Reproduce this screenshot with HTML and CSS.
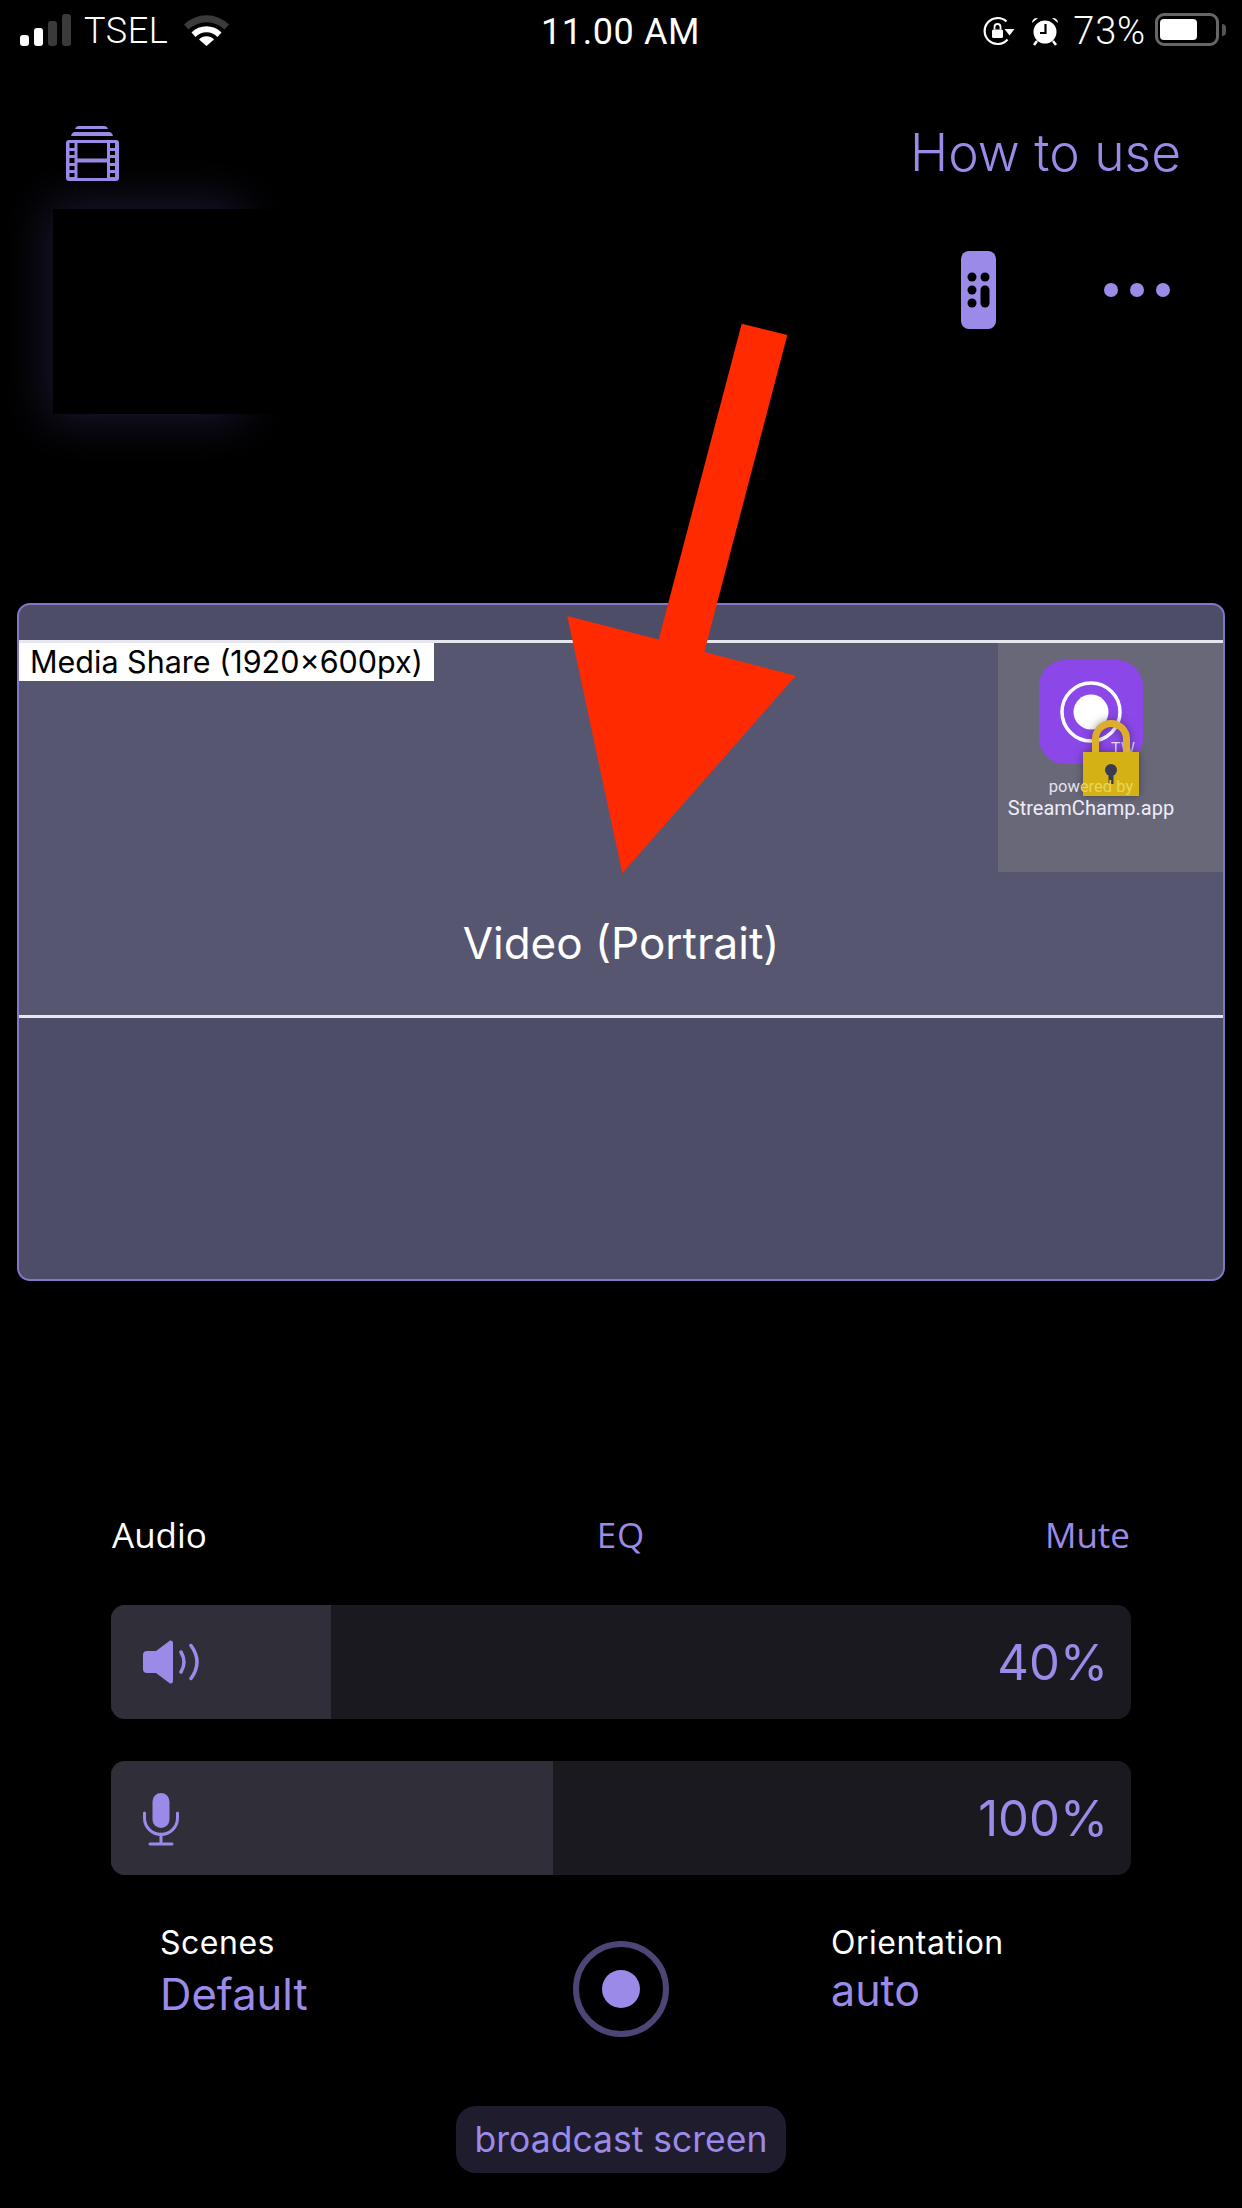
FILE: index.html
```html
<!DOCTYPE html>
<html lang="en">
<head>
<meta charset="utf-8">
<title>Stream</title>
<link rel="stylesheet" href="styles.css">
</head>
<body>
<div class="page">
  <div class="status">
    <div class="status-left">
      <svg class="sig" viewBox="0 0 51 32"><rect x="0" y="21" width="9" height="11" rx="3" fill="#fff"/><rect x="14" y="14" width="9" height="18" rx="3" fill="#fff"/><rect x="28" y="7" width="9" height="25" rx="3" fill="#3a3a3a"/><rect x="42" y="0" width="9" height="32" rx="3" fill="#3a3a3a"/></svg>
      <span class="carrier">TSEL</span>
      <svg class="wifi" viewBox="0 0 45 33"><path d="M0 11.500A32 32 0 0 1 45 11.500L40.500 16.500A26 26 0 0 0 4.500 16.500Z" fill="#3a3a3a"/><path d="M7.500 19.500A21 21 0 0 1 37.500 19.500L33.500 24A15 15 0 0 0 11.500 24Z" fill="#fff"/><path d="M15 26.500A10.500 10.500 0 0 1 30 26.500L22.500 33Z" fill="#fff"/></svg>
    </div>
    <div class="clock">11.00 AM</div>
    <div class="status-right">
      <svg class="rot" viewBox="0 0 32 30"><path d="M23.500 5.500A13 13 0 1 0 24.500 23.500" fill="none" stroke="#fff" stroke-width="2.200"/><path d="M21.500 13H31.500L26.500 19.500Z" fill="#fff"/><rect x="9" y="13.500" width="11" height="8.500" rx="1.500" fill="#fff"/><path d="M11.500 13.500V11A3 3 0 0 1 17.500 11V13.500" fill="none" stroke="#fff" stroke-width="1.800"/></svg>
      <svg class="alarm" viewBox="0 0 28 30"><circle cx="14" cy="16" r="11.500" fill="#fff"/><path d="M1 7A5 5 0 0 1 7 2ZM27 7A5 5 0 0 0 21 2Z" fill="#fff"/><path d="M6 25L3 29M22 25L25 29" stroke="#fff" stroke-width="2.500"/><path d="M14.500 8V17H9" fill="none" stroke="#000" stroke-width="2.200"/></svg>
      <span class="pct">73%</span>
      <div class="battery"><div class="battery-fill"></div></div>
      <div class="battery-nub"></div>
    </div>
  </div>

  <div class="header">
    <svg class="film" viewBox="0 0 53 55">
      <path d="M9 3Q10 0 13 0H38Q41 0 42 3Z" fill="#9b8ae8"/>
      <path d="M5 10Q6 6 9 6H43Q46 6 47 10Z" fill="#9b8ae8"/>
      <path fill-rule="evenodd" fill="#9b8ae8" d="M3 14H50Q53 14 53 17V52Q53 55 50 55H3Q0 55 0 52V17Q0 14 3 14ZM11.500 17V32.500H41V17ZM11.500 36.500V52H41V36.500ZM3.500 17V22H8.500V17ZM3.500 25V29H8.500V25ZM3.500 32V37H8.500V32ZM3.500 40V44H8.500V40ZM3.500 47V51H8.500V47ZM44 17V22H49V17ZM44 25V29H49V25ZM44 32V37H49V32ZM44 40V44H49V40ZM44 47V51H49V47Z"/>
    </svg>
    <span class="howto">How to use</span>
  </div>

  <div class="preview-row">
    <div class="thumb-wrap"><div class="glow"></div><div class="thumb"></div></div>
    <div class="controls">
      <svg class="remote" viewBox="0 0 35 78">
        <rect width="35" height="78" rx="8" fill="#9b8ae8"/>
        <circle cx="11" cy="26" r="4.500" fill="#000"/><circle cx="24" cy="26" r="4.500" fill="#000"/>
        <circle cx="11" cy="39" r="4.500" fill="#000"/><circle cx="11" cy="52" r="4.500" fill="#000"/>
        <rect x="19.500" y="34.500" width="9" height="22" rx="4.500" fill="#000"/>
      </svg>
      <div class="dots"><span class="dot"></span><span class="dot"></span><span class="dot"></span></div>
    </div>
  </div>

  <div class="card">
    <div class="card-band-top"></div>
    <div class="card-middle">
      <div class="media-label">Media Share (1920×600px)</div>
      <div class="watermark">
        <svg class="app-icon" viewBox="0 0 104 104">
          <rect width="104" height="104" rx="26" fill="#8b47e8"/>
          <circle cx="52" cy="52" r="29" fill="none" stroke="#fff" stroke-width="3.500"/>
          <circle cx="52" cy="52" r="17.500" fill="#fff"/>
          <text x="84" y="94" class="tw">TW</text>
        </svg>
        <svg class="lock" viewBox="0 0 56 76">
          <path d="M12.500 36V19A15.500 15.500 0 0 1 43.500 19V36" fill="none" stroke="#dcae2c" stroke-width="7"/>
          <rect y="32" width="56" height="44" fill="#d4b216"/>
          <circle cx="28" cy="50" r="6" fill="#3a3a50"/>
          <rect x="25.500" y="51" width="5" height="13" fill="#3a3a50"/>
        </svg>
        <div class="powered">pow<span class="powered-faded">ered by</span></div>
        <div class="brand">StreamChamp.app</div>
      </div>
      <div class="video-title">Video (Portrait)</div>
    </div>
    <div class="card-band-bottom"></div>
  </div>

  <div class="audio-head">
    <span class="audio-label">Audio</span>
    <span class="audio-link audio-eq">EQ</span>
    <span class="audio-link audio-mute">Mute</span>
  </div>

  <div class="slider">
    <div class="slider-fill slider-fill-vol" ></div>
    <svg class="speaker" viewBox="0 0 56 44">
      <path d="M4 11H13L27 0.500Q30 0 30 3V41Q30 44 27 43.500L13 33H4Q0 33 0 29V15Q0 11 4 11Z" fill="#9b8ae8"/>
      <path d="M38 12Q44 22 38 32M48 5.500Q60 22 48 38.500" fill="none" stroke="#9b8ae8" stroke-width="3.500" stroke-linecap="round"/>
    </svg>
    <span class="slider-value">40%</span>
  </div>

  <div class="slider slider-mic">
    <div class="slider-fill slider-fill-mic"></div>
    <svg class="mic" viewBox="0 0 36 53">
      <rect x="9.500" y="0" width="17" height="35" rx="8.500" fill="#9b8ae8"/>
      <path d="M1.500 20V25A16.500 16.500 0 0 0 34.500 25V20" fill="none" stroke="#9b8ae8" stroke-width="3" stroke-linecap="round"/>
      <path d="M18 41V50M7 51H29" stroke="#9b8ae8" stroke-width="3" stroke-linecap="round"/>
    </svg>
    <span class="slider-value">100%</span>
  </div>

  <div class="bottom">
    <div class="bottom-col">
      <div class="bottom-label">Scenes</div>
      <div class="bottom-value-lg">Default</div>
    </div>
    <div class="record"><div class="record-dot"></div></div>
    <div class="bottom-col bottom-col-right">
      <div class="bottom-label">Orientation</div>
      <div class="bottom-value">auto</div>
    </div>
  </div>

  <div class="pill-row"><div class="pill">broadcast screen</div></div>

  <svg class="arrow" viewBox="0 0 240 560">
    <polygon points="181.700,3.700 227.300,15 144.300,332 235.700,355.800 62.300,553.300 7.300,296 98.700,319.500" fill="#ff2a00"/>
  </svg>
</div>
</body>
</html>
```
FILE: styles.css
```css
* { box-sizing: border-box; }
html, body { margin: 0; padding: 0; background: #000; }
.page {
  position: relative;
  width: 1242px;
  height: 2208px;
  overflow: hidden;
  background: #000;
  color: #fff;
  font-family: Inter, "Liberation Sans", sans-serif;
  display: flex;
  flex-direction: column;
}

/* status bar */
.status {
  height: 60px;
  display: grid;
  grid-template-columns: 542px 1fr auto;
  align-items: start;
  padding: 13px 16px 0 20px;
  font-family: Roboto, sans-serif;
}
.status-left, .status-right { display: flex; align-items: flex-start; }
.sig { width: 51px; height: 32px; margin-top: 1px; }
.carrier { font-size: 36px; line-height: 36px; margin-left: 13px; font-weight: 300; letter-spacing: .6px; width: 86px; }
.wifi { width: 45px; height: 33px; margin-left: 14px; }
.clock { font-size: 36px; line-height: 36px; font-weight: 400; margin-left: -21px; letter-spacing: .6px; margin-top: 1px; }
.rot { width: 32px; height: 30px; margin-top: 3px; }
.alarm { width: 28px; height: 30px; margin-top: 3px; margin-left: 16px; }
.pct { font-size: 38px; line-height: 36px; font-weight: 300; margin-left: 14px; margin-right: 9px; letter-spacing: .8px; }
.battery { width: 64px; height: 33px; border: 3px solid #666; border-radius: 9px; padding: 3px 19px 3px 2px; }
.battery-fill { height: 100%; background: #fff; border-radius: 4px; }
.battery-nub { width: 4px; height: 12px; margin: 11px 0 0 3px; background: #555; border-radius: 0 4px 4px 0; }

/* header */
.header {
  height: 66px;
  margin-top: 60px;
  padding: 6px 61px 0 66px;
  display: flex;
  justify-content: space-between;
  align-items: flex-start;
}
.film { width: 53px; height: 55px; }
.howto { font-size: 51.500px; line-height: 56px; font-weight: 350; color: #9b8ae8; margin-top: -2px; white-space: nowrap; }

/* preview row */
.preview-row {
  height: 205px;
  margin-top: 23px;
  padding-left: 53px;
  padding-right: 72px;
  display: flex;
  justify-content: space-between;
  align-items: flex-start;
}
.thumb-wrap { position: relative; width: 215px; height: 205px; }
.glow { position: absolute; left: 0; top: 0; width: 185px; height: 205px; box-shadow: 0 0 45px 6px rgba(96, 86, 170, .28); }
.thumb { position: absolute; left: 0; top: 0; width: 400px; height: 205px; background: #000; }
.controls { display: flex; align-items: center; gap: 108px; padding-top: 42px; position: relative; }
.remote { width: 35px; height: 78px; }
.dots { display: flex; gap: 12px; }
.dot { width: 14px; height: 14px; border-radius: 50%; background: #9b8ae8; }

/* card */
.card {
  margin: 189px 0 0 17px;
  width: 1208px;
  height: 678px;
  background: #4d4d68;
  border: 2px solid #8176c8;
  border-radius: 13px;
  display: flex;
  flex-direction: column;
  overflow: hidden;
}
.card-band-top { height: 35px; flex: none; }
.card-band-bottom { flex: 1; }
.card-middle {
  position: relative;
  height: 378px;
  flex: none;
  background: #565670;
  border-top: 3px solid #e6e6ee;
  border-bottom: 3px solid #e6e6ee;
  display: flex;
  flex-direction: column;
  justify-content: space-between;
  align-items: center;
}
.media-label {
  align-self: flex-start;
  height: 38px;
  width: 415px;
  background: #fff;
  color: #000;
  font-size: 30.500px;
  line-height: 38px;
  padding-left: 11px;
  white-space: nowrap;
}
.video-title { font-size: 44px; line-height: 56px; font-weight: 400; color: #fff; margin-bottom: 44px; white-space: nowrap; }
.watermark {
  position: absolute;
  right: 0;
  top: 0;
  width: 225px;
  height: 229px;
  background: #686878;
  display: flex;
  flex-direction: column;
  align-items: center;
  padding: 17px 39px 0 0;
  font-family: Roboto, sans-serif;
}
.app-icon { width: 104px; height: 104px; flex: none; }
.tw { font-size: 16px; fill: #fff; opacity: .8; text-anchor: middle; font-family: Roboto, sans-serif; }
.lock { position: absolute; left: 85px; top: 77px; width: 56px; height: 76px; filter: drop-shadow(0 0 4px rgba(30, 30, 50, .5)); }
.powered { position: relative; font-size: 16.500px; line-height: 18px; margin-top: 14px; color: #e6e0f4; white-space: nowrap; }
.powered-faded { color: #e6d75c; }
.brand { position: relative; font-size: 20px; line-height: 24px; color: #f0ecf8; white-space: nowrap; }

/* audio */
.audio-head {
  height: 40px;
  margin-top: 234px;
  padding: 0 112px;
  display: grid;
  grid-template-columns: 1fr auto 1fr;
  align-items: center;
  font-size: 35px;
  line-height: 40px;
  font-family: "Open Sans", sans-serif;
}
.audio-label { color: #fff; }
.audio-link { color: #9b8ae8; }
.audio-eq { letter-spacing: 1px; }
.audio-mute { justify-self: end; }

.slider {
  position: relative;
  margin: 50px 0 0 111px;
  width: 1020px;
  height: 114px;
  border-radius: 14px;
  background: #1a191f;
  overflow: hidden;
  display: flex;
  justify-content: space-between;
  align-items: center;
  padding: 0 23px 0 32px;
}
.slider-mic { margin-top: 42px; }
.slider-fill { position: absolute; left: 0; top: 0; bottom: 0; background: #302e39; }
.slider-fill-vol { width: 220px; }
.slider-fill-mic { width: 442px; }
.speaker { width: 56px; height: 44px; position: relative; }
.mic { width: 36px; height: 53px; position: relative; margin-top: 2px; }
.slider-value { position: relative; font-size: 49px; font-weight: 400; color: #9b8ae8; }

/* bottom */
.bottom {
  margin-top: 50px;
  padding-left: 160px;
  display: grid;
  grid-template-columns: 413px 96px 1fr;
  align-items: start;
  height: 112px;
}
.bottom-col-right { padding-left: 162px; }
.bottom-label { font-size: 32px; line-height: 36px; color: #fff; letter-spacing: .5px; }
.bottom-value-lg { font-size: 43.500px; line-height: 52px; color: #9b8ae8; font-weight: 400; margin-top: 7px; }
.bottom-value { font-size: 43px; line-height: 48px; color: #9b8ae8; font-weight: 400; margin-top: 5px; }
.record {
  width: 96px;
  height: 96px;
  margin-top: 16px;
  border: 6px solid #4d4575;
  border-radius: 50%;
  display: flex;
  justify-content: center;
  align-items: center;
}
.record-dot { width: 38px; height: 38px; border-radius: 50%; background: #9b8ae8; }

.pill-row { display: flex; justify-content: center; margin-top: 69px; }
.pill {
  width: 330px;
  height: 67px;
  border-radius: 20px;
  background: #1f1c2e;
  color: #9b8ae8;
  font-size: 35.500px;
  font-weight: 400;
  display: flex;
  justify-content: center;
  align-items: center;
  white-space: nowrap;
}

/* annotation arrow over the page */
.arrow { position: absolute; left: 560px; top: 320px; width: 240px; height: 560px; }
```
